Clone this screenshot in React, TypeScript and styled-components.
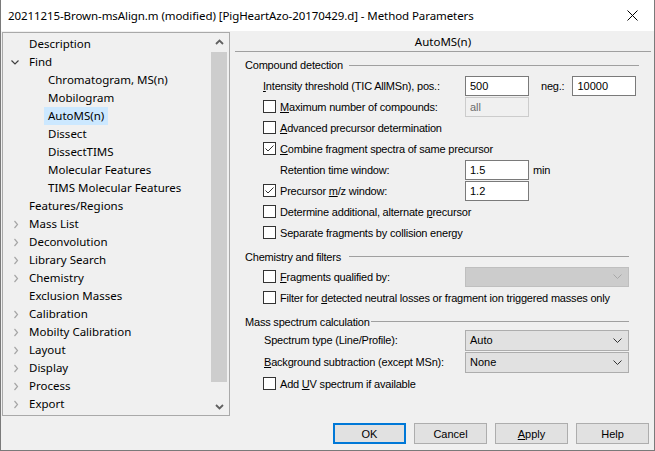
import React from 'react';
import styled, { createGlobalStyle } from 'styled-components';

const uiFont = `"Noto Sans", "DejaVu Sans", sans-serif`;
const formFont = `"Liberation Sans", Arial, sans-serif`;

const Global = createGlobalStyle`
  html, body { margin: 0; padding: 0; background: #ffffff; }
  body { font-family: ${uiFont}; }
  * { box-sizing: border-box; }
`;

const Window = styled.div`
  width: 655px;
  height: 451px;
  display: flex;
  flex-direction: column;
  border: 1px solid #7a7a7a;
  border-top: none;
  background: #f0f0f0;
  overflow: hidden;
`;

const TitleBar = styled.div`
  flex: 0 0 31px;
  background: #ffffff;
  display: flex;
  align-items: center;
  justify-content: space-between;
  padding: 0 16px 1px 7px;
  font-family: ${uiFont};
  font-size: 11.5px;
  letter-spacing: -0.08px;
  color: #000;
`;

const CloseIcon = styled.svg`
  width: 11px;
  height: 11px;
  display: block;
`;

const Body = styled.div`
  flex: 1;
  display: flex;
  min-height: 0;
`;

const TreePanel = styled.div`
  margin: 1px 0 0 1px;
  width: 228px;
  height: 384px;
  border: 1px solid #a9a9a9;
  display: flex;
  background: #f0f0f0;
`;

const TreeList = styled.div`
  flex: 1;
  padding-top: 2px;
  font-family: ${uiFont};
  font-size: 11.5px;
  color: #000;
`;

const TreeRow = styled.div<{ $level: number }>`
  height: 18px;
  display: flex;
  align-items: center;
  padding-left: ${(p) => p.$level * 19}px;
`;

const Expander = styled.div`
  width: 22px;
  height: 18px;
  display: flex;
  align-items: center;
  flex: 0 0 22px;
`;

const TreeLabel = styled.span<{ $selected?: boolean }>`
  height: 18px;
  line-height: 18px;
  padding: 0 4px;
  white-space: nowrap;
  background: ${(p) => (p.$selected ? '#cce8ff' : 'transparent')};
`;

const ScrollBar = styled.div`
  width: 18px;
  display: flex;
  flex-direction: column;
  background: #f0f0f0;
`;

const ScrollButton = styled.div`
  height: 17px;
  flex: 0 0 17px;
  display: flex;
  align-items: center;
  justify-content: center;
  padding-right: 2px;
`;

const ScrollTrack = styled.div`
  flex: 1;
  padding: 2px 2px 16px 0;
  display: flex;
`;

const ScrollThumb = styled.div`
  flex: 1;
  background: #cdcdcd;
`;

const RightPanel = styled.div`
  flex: 1;
  display: flex;
  flex-direction: column;
  min-width: 0;
`;

const PageHeader = styled.div`
  height: 21px;
  flex: 0 0 21px;
  margin: 0 3px 0 5px;
  border-bottom: 1px solid #a0a0a0;
  padding-top: 3px;
  text-align: center;
  font-family: ${uiFont};
  font-size: 11.5px;
  line-height: 16px;
  color: #000;
`;

const Content = styled.div`
  display: flex;
  flex-direction: column;
  font-family: ${formFont};
  font-size: 11px;
  letter-spacing: -0.2px;
  color: #000;
`;

const GroupHeader = styled.div<{ $top: number; $h: number; $right: number; $pt?: number }>`
  display: flex;
  align-items: center;
  height: ${(p) => p.$h}px;
  margin-top: ${(p) => p.$top}px;
  padding: ${(p) => p.$pt ?? 0}px ${(p) => p.$right}px 0 15px;
  white-space: nowrap;
`;

const GroupLine = styled.div<{ $gap: number }>`
  flex: 1;
  height: 1px;
  margin-left: ${(p) => p.$gap}px;
  background: #a0a0a0;
`;

const Row = styled.div<{ $h?: number }>`
  display: flex;
  align-items: center;
  height: ${(p) => p.$h ?? 21}px;
  padding-left: 33px;
`;

const Label = styled.div<{ $indent?: number; $width?: number }>`
  flex: 0 0 ${(p) => p.$width ?? 202}px;
  padding-left: ${(p) => p.$indent ?? 0}px;
  white-space: nowrap;
`;

const CheckLabel = styled.label<{ $width?: number }>`
  display: flex;
  align-items: center;
  gap: 4px;
  white-space: nowrap;
  ${(p) => (p.$width ? `flex: 0 0 ${p.$width}px;` : '')}
`;

const Box = styled.span`
  width: 13px;
  height: 13px;
  flex: 0 0 13px;
  border: 1px solid #333333;
  background: #ffffff;
  display: flex;
  align-items: center;
  justify-content: center;
`;

const TextBox = styled.div<{ $disabled?: boolean }>`
  width: 64px;
  height: 20px;
  border: 1px solid ${(p) => (p.$disabled ? '#cccccc' : '#7a7a7a')};
  background: ${(p) => (p.$disabled ? '#f0f0f0' : '#ffffff')};
  color: ${(p) => (p.$disabled ? '#6d6d6d' : '#000')};
  padding: 0 4px;
  line-height: 18px;
  font-size: 11px;
  letter-spacing: 0;
`;

const Unit = styled.span<{ $ml: number }>`
  margin-left: ${(p) => p.$ml}px;
  white-space: nowrap;
`;

const NegLabel = styled.span`
  margin: 0 8px 0 12px;
`;

const Combo = styled.div<{ $disabled?: boolean; $h?: number }>`
  width: 164px;
  height: ${(p) => p.$h ?? 21}px;
  border: 1px solid ${(p) => (p.$disabled ? '#bfbfbf' : '#adadad')};
  background: ${(p) => (p.$disabled ? '#cccccc' : '#e1e1e1')};
  display: flex;
  align-items: center;
  justify-content: space-between;
  padding: 0 6px 0 4px;
  font-size: 11px;
  letter-spacing: 0;
`;

const Footer = styled.div`
  margin-top: auto;
  display: flex;
  justify-content: flex-end;
  gap: 8px;
  padding: 0 5px 6px 0;
`;

const Button = styled.button<{ $default?: boolean }>`
  width: 73px;
  height: 21px;
  padding: 0;
  background: #e1e1e1;
  border: ${(p) => (p.$default ? '2px solid #0078d7' : '1px solid #adadad')};
  font-family: ${formFont};
  font-size: 11px;
  color: #000;
`;

const U = styled.span`
  text-decoration: underline;
  text-underline-offset: 1px;
`;

const ChevronDown = ({ color = '#333' }: { color?: string }) => (
  <svg width={9} height={5} viewBox="0 0 9 5" style={{ display: 'block' }}>
    <polyline points="0.5,0.5 4.5,4.5 8.5,0.5" fill="none" stroke={color} strokeWidth="1" />
  </svg>
);

const TreeChevron = ({ open }: { open?: boolean }) =>
  open ? (
    <svg width={22} height={18} viewBox="0 0 22 18" style={{ display: 'block' }}>
      <polyline points="8.5,7.5 12,11 15.5,7.5" fill="none" stroke="#404040" strokeWidth="1.2" />
    </svg>
  ) : (
    <svg width={22} height={18} viewBox="0 0 22 18" style={{ display: 'block' }}>
      <polyline points="11.5,6 14.5,9.5 11.5,13" fill="none" stroke="#a6a6a6" strokeWidth="1.2" />
    </svg>
  );

const ScrollArrow = ({ up }: { up?: boolean }) => (
  <svg width={9} height={6} viewBox="0 0 9 6" style={{ display: 'block' }}>
    <polyline
      points={up ? '1,5 4.5,1.5 8,5' : '1,1 4.5,4.5 8,1'}
      fill="none"
      stroke="#606060"
      strokeWidth="1.8"
    />
  </svg>
);

const CheckBox = ({ checked }: { checked?: boolean }) => (
  <Box>
    {checked && (
      <svg width={11} height={11} viewBox="0 0 11 11" style={{ display: 'block' }}>
        <polyline points="1.5,5.5 4,8 9.5,2.5" fill="none" stroke="#333" strokeWidth="1" />
      </svg>
    )}
  </Box>
);

type Item = { label: string; level: number; exp?: 'open' | 'closed'; selected?: boolean };

const items: Item[] = [
  { label: 'Description', level: 0 },
  { label: 'Find', level: 0, exp: 'open' },
  { label: 'Chromatogram, MS(n)', level: 1 },
  { label: 'Mobilogram', level: 1 },
  { label: 'AutoMS(n)', level: 1, selected: true },
  { label: 'Dissect', level: 1 },
  { label: 'DissectTIMS', level: 1 },
  { label: 'Molecular Features', level: 1 },
  { label: 'TIMS Molecular Features', level: 1 },
  { label: 'Features/Regions', level: 0 },
  { label: 'Mass List', level: 0, exp: 'closed' },
  { label: 'Deconvolution', level: 0, exp: 'closed' },
  { label: 'Library Search', level: 0, exp: 'closed' },
  { label: 'Chemistry', level: 0, exp: 'closed' },
  { label: 'Exclusion Masses', level: 0 },
  { label: 'Calibration', level: 0, exp: 'closed' },
  { label: 'Mobilty Calibration', level: 0, exp: 'closed' },
  { label: 'Layout', level: 0, exp: 'closed' },
  { label: 'Display', level: 0, exp: 'closed' },
  { label: 'Process', level: 0, exp: 'closed' },
  { label: 'Export', level: 0, exp: 'closed' },
];

export default function App() {
  return (
    <>
      <Global />
      <Window>
        <TitleBar>
          <span>20211215-Brown-msAlign.m (modified) [PigHeartAzo-20170429.d] - Method Parameters</span>
          <CloseIcon viewBox="0 0 11 11">
            <line x1="0.5" y1="0.5" x2="10.5" y2="10.5" stroke="#000" strokeWidth="1" />
            <line x1="10.5" y1="0.5" x2="0.5" y2="10.5" stroke="#000" strokeWidth="1" />
          </CloseIcon>
        </TitleBar>
        <Body>
          <TreePanel>
            <TreeList>
              {items.map((it) => (
                <TreeRow key={it.label} $level={it.level}>
                  <Expander>{it.exp && <TreeChevron open={it.exp === 'open'} />}</Expander>
                  <TreeLabel $selected={it.selected}>{it.label}</TreeLabel>
                </TreeRow>
              ))}
            </TreeList>
            <ScrollBar>
              <ScrollButton>
                <ScrollArrow up />
              </ScrollButton>
              <ScrollTrack>
                <ScrollThumb />
              </ScrollTrack>
              <ScrollButton>
                <ScrollArrow />
              </ScrollButton>
            </ScrollBar>
          </TreePanel>
          <RightPanel>
            <PageHeader>AutoMS(n)</PageHeader>
            <Content>
              <GroupHeader $top={3} $h={20} $right={15}>
                Compound detection
                <GroupLine $gap={6} />
              </GroupHeader>
              <Row>
                <Label>
                  <U>I</U>ntensity threshold (TIC AllMSn), pos.:
                </Label>
                <TextBox>500</TextBox>
                <NegLabel>neg.:</NegLabel>
                <TextBox>10000</TextBox>
              </Row>
              <Row>
                <CheckLabel $width={202}>
                  <CheckBox />
                  <span>
                    <U>M</U>aximum number of compounds:
                  </span>
                </CheckLabel>
                <TextBox $disabled>all</TextBox>
              </Row>
              <Row>
                <CheckLabel>
                  <CheckBox />
                  <span>
                    <U>A</U>dvanced precursor determination
                  </span>
                </CheckLabel>
              </Row>
              <Row>
                <CheckLabel>
                  <CheckBox checked />
                  <span>
                    <U>C</U>ombine fragment spectra of same precursor
                  </span>
                </CheckLabel>
              </Row>
              <Row>
                <Label $indent={17}>Retention time window:</Label>
                <TextBox>1.5</TextBox>
                <Unit $ml={4}>min</Unit>
              </Row>
              <Row>
                <CheckLabel $width={202}>
                  <CheckBox checked />
                  <span>
                    Precursor <U>m</U>/z window:
                  </span>
                </CheckLabel>
                <TextBox>1.2</TextBox>
              </Row>
              <Row>
                <CheckLabel>
                  <CheckBox />
                  <span>
                    Determine additional, alternate <U>p</U>recursor
                  </span>
                </CheckLabel>
              </Row>
              <Row>
                <CheckLabel>
                  <CheckBox />
                  <span>Separate fragments by collision energy</span>
                </CheckLabel>
              </Row>

              <GroupHeader $top={4} $h={19} $right={25}>
                Chemistry and filters
                <GroupLine $gap={8} />
              </GroupHeader>
              <Row>
                <CheckLabel $width={202}>
                  <CheckBox />
                  <span>
                    <U>F</U>ragments qualified by:
                  </span>
                </CheckLabel>
                <Combo $disabled $h={20}>
                  <span />
                  <ChevronDown color="#a8a8a8" />
                </Combo>
              </Row>
              <Row>
                <CheckLabel>
                  <CheckBox />
                  <span>
                    Filter for <U>d</U>etected neutral losses or fragment ion triggered masses only
                  </span>
                </CheckLabel>
              </Row>

              <GroupHeader $top={3} $h={18} $right={25} $pt={3}>
                Mass spectrum calculation
                <GroupLine $gap={1} />
              </GroupHeader>
              <Row $h={22}>
                <Label $indent={1}>Spectrum type (Line/Profile):</Label>
                <Combo>
                  <span>Auto</span>
                  <ChevronDown />
                </Combo>
              </Row>
              <Row $h={22}>
                <Label $indent={1}>
                  <U>B</U>ackground subtraction (except MSn):
                </Label>
                <Combo>
                  <span>None</span>
                  <ChevronDown />
                </Combo>
              </Row>
              <Row>
                <CheckLabel>
                  <CheckBox />
                  <span>
                    Add <U>U</U>V spectrum if available
                  </span>
                </CheckLabel>
              </Row>
            </Content>
            <Footer>
              <Button $default>OK</Button>
              <Button>Cancel</Button>
              <Button>
                <U>A</U>pply
              </Button>
              <Button>Help</Button>
            </Footer>
          </RightPanel>
        </Body>
      </Window>
    </>
  );
}
